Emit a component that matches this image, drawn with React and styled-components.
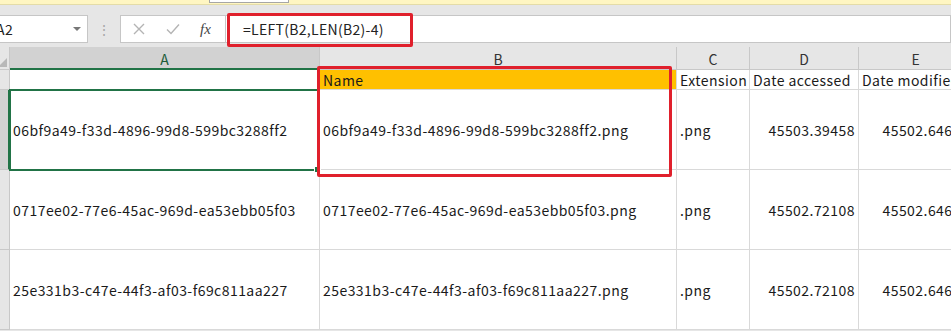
import React from 'react';
import styled, { createGlobalStyle } from 'styled-components';

const GlobalStyle = createGlobalStyle`
    html, body {
        margin: 0;
        padding: 0;
        background: #e6e6e6;
        overflow: hidden;
    }
    body {
        font-family: "Noto Sans CJK SC", "Noto Sans", sans-serif;
    }
`;

const Page = styled.div`
    width: 951px;
    height: 331px;
    overflow: hidden;
    background: #e6e6e6;
`;

const MessageBar = styled.div`
    position: relative;
    height: 4px;
    background: #fff6c2;
    border-bottom: 1px solid #e4dca8;
`;

const BarButton = styled.div`
    position: absolute;
    left: 209px;
    top: -3px;
    width: 78px;
    height: 4px;
    background: #ffffff;
    border: 1px solid #a6a6a6;
`;

const FormulaRow = styled.div`
    display: flex;
    align-items: center;
    height: 28px;
    margin-top: 10px;
    margin-bottom: 4px;
`;

const NameBox = styled.div`
    display: flex;
    align-items: center;
    justify-content: space-between;
    width: 88px;
    height: 28px;
    box-sizing: border-box;
    background: #ffffff;
    border: 1px solid #c6c6c6;
    border-left: none;
    padding-right: 6px;
    font-size: 14px;
    color: #222;
    overflow: hidden;
`;

const NameText = styled.span`
    margin-left: -4px;
    letter-spacing: 0.4px;
`;

const Caret = styled.span`
    width: 0;
    height: 0;
    border-left: 4px solid transparent;
    border-right: 4px solid transparent;
    border-top: 4px solid #777;
`;

const Grip = styled.div`
    width: 32px;
    text-align: center;
    color: #a8a8a8;
    font-size: 14px;
`;

const FuncBox = styled.div`
    display: flex;
    align-items: center;
    justify-content: space-around;
    width: 105px;
    height: 28px;
    box-sizing: border-box;
    background: #ffffff;
    border: 1px solid #c6c6c6;
    border-right: none;
    padding: 0 4px 0 2px;
`;

const Fx = styled.span`
    font-family: "Liberation Serif", serif;
    font-style: italic;
    font-size: 15px;
    color: #444;
`;

const FormulaInput = styled.div`
    position: relative;
    flex: 1;
    height: 28px;
    box-sizing: border-box;
    background: #ffffff;
    border: 1px solid #c6c6c6;
    padding-left: 17px;
    display: flex;
    align-items: center;
    font-size: 14px;
    letter-spacing: 0.3px;
    color: #222;
`;

const Annotation = styled.div`
    position: absolute;
    box-sizing: border-box;
    border: 3px solid #e0202c;
    border-radius: 2px;
    pointer-events: none;
`;

const Grid = styled.div`
    position: relative;
    display: grid;
    grid-template-columns: 10px 310px 357px 73px 109px 114px;
    grid-template-rows: 23px 20px 80px 80px 80px;
    background: #ffffff;
    font-size: 14px;
    color: #1a1a1a;
`;

const Corner = styled.div`
    position: relative;
    background: #e6e6e6;
    border-right: 1px solid #c8c8c8;
    border-bottom: 1px solid #c8c8c8;
    overflow: hidden;
    &::after {
        content: '';
        position: absolute;
        right: 2px;
        bottom: 2px;
        border-left: 9px solid transparent;
        border-bottom: 9px solid #b8b8b8;
    }
`;

const ColHead = styled.div`
    display: flex;
    align-items: center;
    justify-content: center;
    background: ${p => (p.$active ? '#d2d2d2' : '#e6e6e6')};
    border-right: 1px solid #c8c8c8;
    border-bottom: ${p => (p.$active ? '2px solid #217346' : '1px solid #c8c8c8')};
    color: ${p => (p.$active ? '#1e5c3a' : '#333')};
    font-size: 14px;
    padding-top: 2px;
    box-sizing: border-box;
`;

const RowHead = styled.div`
    background: ${p => (p.$active ? '#d2d2d2' : '#e6e6e6')};
    border-right: ${p => (p.$active ? '2px solid #217346' : '1px solid #c8c8c8')};
    border-bottom: 1px solid #c8c8c8;
    box-sizing: border-box;
`;

const Cell = styled.div`
    display: flex;
    align-items: ${p => (p.$top ? 'flex-end' : 'center')};
    justify-content: ${p => (p.$num ? 'flex-end' : 'flex-start')};
    padding: ${p => (p.$top ? '0 3px 0 3px' : '2px 3px 0 3px')};
    background: ${p => p.$fill || '#ffffff'};
    border-right: 1px solid #d9d9d9;
    border-bottom: 1px solid #d9d9d9;
    white-space: nowrap;
    overflow: hidden;
    box-sizing: border-box;
    line-height: 17px;
    letter-spacing: 0.45px;
`;

const Selection = styled.div`
    position: absolute;
    left: 9px;
    top: 42px;
    width: 310px;
    height: 82px;
    box-sizing: border-box;
    border: 2px solid #217346;
    pointer-events: none;
    &::after {
        content: '';
        position: absolute;
        right: -4px;
        bottom: -4px;
        width: 5px;
        height: 5px;
        background: #217346;
        border: 1px solid #ffffff;
    }
`;

const CrossIcon = () => (
    <svg width="12" height="12" viewBox="0 0 12 12">
        <path d="M1 1 L11 11 M11 1 L1 11" stroke="#b4b4b4" strokeWidth="1.4" fill="none" />
    </svg>
);

const CheckIcon = () => (
    <svg width="14" height="12" viewBox="0 0 14 12">
        <path d="M1 6.5 L5 10.5 L13 1.5" stroke="#b4b4b4" strokeWidth="1.4" fill="none" />
    </svg>
);

const rows = [
    ['06bf9a49-f33d-4896-99d8-599bc3288ff2', '06bf9a49-f33d-4896-99d8-599bc3288ff2.png', '.png', '45503.39458', '45502.64631'],
    ['0717ee02-77e6-45ac-969d-ea53ebb05f03', '0717ee02-77e6-45ac-969d-ea53ebb05f03.png', '.png', '45502.72108', '45502.64631'],
    ['25e331b3-c47e-44f3-af03-f69c811aa227', '25e331b3-c47e-44f3-af03-f69c811aa227.png', '.png', '45502.72108', '45502.64631'],
];

const App = () => {
    return (
        <Page>
            <GlobalStyle />
            <MessageBar>
                <BarButton />
            </MessageBar>
            <FormulaRow>
                <NameBox>
                    <NameText>A2</NameText>
                    <Caret />
                </NameBox>
                <Grip>⋮</Grip>
                <FuncBox>
                    <CrossIcon />
                    <CheckIcon />
                    <Fx>fx</Fx>
                </FuncBox>
                <FormulaInput>
                    =LEFT(B2,LEN(B2)-4)
                    <Annotation style={{ left: 1, top: -3, width: 186, height: 34 }} />
                </FormulaInput>
            </FormulaRow>
            <Grid>
                <Corner />
                <ColHead $active>A</ColHead>
                <ColHead>B</ColHead>
                <ColHead>C</ColHead>
                <ColHead>D</ColHead>
                <ColHead>E</ColHead>

                <RowHead />
                <Cell $top />
                <Cell $top $fill="#ffc000">Name</Cell>
                <Cell $top>Extension</Cell>
                <Cell $top>Date accessed</Cell>
                <Cell $top>Date modified</Cell>

                {rows.map((r, i) => (
                    <React.Fragment key={i}>
                        <RowHead $active={i === 0} />
                        <Cell>{r[0]}</Cell>
                        <Cell>{r[1]}</Cell>
                        <Cell>{r[2]}</Cell>
                        <Cell $num>{r[3]}</Cell>
                        <Cell $num>{r[4]}</Cell>
                    </React.Fragment>
                ))}

                <Selection />
                <Annotation style={{ left: 317, top: 19, width: 355, height: 111 }} />
            </Grid>
        </Page>
    );
};

export default App;
